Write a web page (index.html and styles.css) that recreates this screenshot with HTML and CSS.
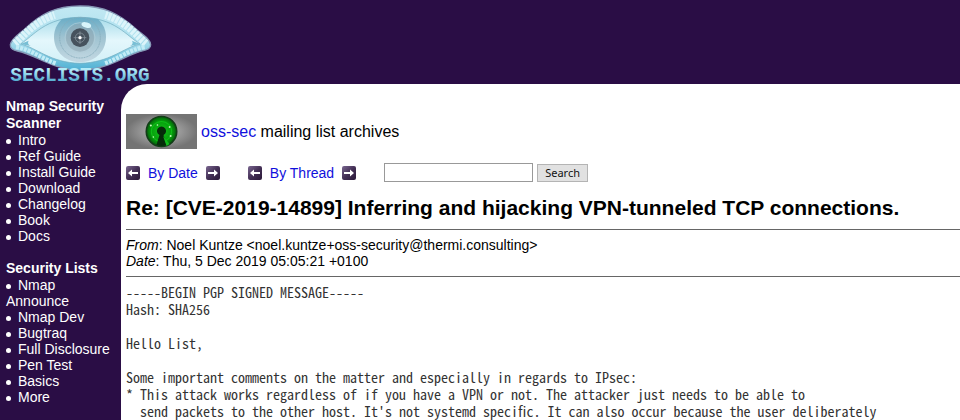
FILE: index.html
```
<!DOCTYPE html>
<html lang="en">
<head>
  <meta charset="UTF-8">
  <meta name="viewport" content="width=device-width, initial-scale=1">
  <title>oss-sec: Re: [CVE-2019-14899] Inferring and hijacking VPN-tunneled TCP connections.</title>
  <link rel="stylesheet" href="styles.css">
</head>
<body>

  <header class="top">
    <a href="#" aria-label="SecLists.Org">
      <svg class="logo" viewBox="0 0 480 252">
        <defs>
          <linearGradient id="lid" x1="0" y1="0" x2="0" y2="1">
            <stop offset="0" stop-color="#c3e9f3"/>
            <stop offset="0.55" stop-color="#a9deed"/>
            <stop offset="1" stop-color="#4fb0d3"/>
          </linearGradient>
          <linearGradient id="white" x1="0" y1="0" x2="0" y2="1">
            <stop offset="0" stop-color="#a5dbe9"/>
            <stop offset="0.5" stop-color="#e4f7fc"/>
            <stop offset="1" stop-color="#d3f0f7"/>
          </linearGradient>
          <linearGradient id="iris" x1="0" y1="0" x2="0" y2="1">
            <stop offset="0" stop-color="#68acc6"/>
            <stop offset="0.45" stop-color="#9fc3d1"/>
            <stop offset="1" stop-color="#c4d9e3"/>
          </linearGradient>
          <linearGradient id="letters" x1="0" y1="0" x2="0" y2="1">
            <stop offset="0.2" stop-color="#b4ecf8"/>
            <stop offset="0.8" stop-color="#4aa5cb"/>
          </linearGradient>
        </defs>
        <path d="M31 134C32 119 55 104 72 89C122 42 166 18 240 18C314 18 358 42 408 87C426 103 451 116 452 134C452 146 442 149 430 152C374 165 330 208 240 211C154 208 110 165 52 153C38 150 30 146 31 134Z" fill="url(#lid)" stroke="#8798b6" stroke-width="4"/>
        <path d="M62 132C100 108 136 52 240 52C344 52 380 108 420 132C370 143 330 188 240 190C150 188 110 143 62 132Z" fill="url(#white)" stroke="#6da9bd" stroke-width="2"/>
        <!-- lashes -->
        <g fill="none" stroke="#dcf4fa" stroke-width="23" stroke-dasharray="9 3">
          <path d="M44 130C72 108 100 66 164 45"/>
          <path d="M438 130C410 108 382 66 316 45"/>
        </g>
        <g fill="none" stroke="#c3ecf6" stroke-width="13" stroke-dasharray="9 3">
          <path d="M48 141C100 151 126 177 170 191"/>
          <path d="M434 141C382 151 356 177 312 191"/>
        </g>
        <path d="M62 132L86 122Q80 131 92 138ZM420 132L396 122Q402 131 390 138Z" fill="#78bfd5"/>
        <path d="M186 57Q240 46 294 57C310 72 318 91 318 111C318 148 293 184 240 187C187 184 162 148 162 111C162 91 170 72 186 57Z" fill="url(#iris)"/>
        <circle cx="240" cy="113" r="61" fill="none" stroke="#86adbd" stroke-width="3" stroke-dasharray="3 2"/>
        <circle cx="240" cy="113" r="42" fill="#8fa7b2" opacity="0.6"/>
        <circle cx="240" cy="113" r="45" fill="none" stroke="#b4cdd8" stroke-width="2"/>
        <circle cx="240" cy="113" r="28" fill="#46525d"/>
        <circle cx="240" cy="113" r="14" fill="none" stroke="#8e9ca5" stroke-width="2"/>
        <path d="M240 94V132M221 113H259" stroke="#8e9ca5" stroke-width="2"/>
        <circle cx="240" cy="113" r="5" fill="#fff"/>
        <ellipse cx="259" cy="75" rx="15" ry="8" fill="#d8f5fb" transform="rotate(18 259 75)"/>
        <text class="logo-text" x="31" y="243">SECLISTS.ORG</text>
      </svg>
    </a>
  </header>

  <div class="page">
    <nav class="sidebar">
      <h2>Nmap Security Scanner</h2>
      <ul>
        <li><a href="#">Intro</a></li>
        <li><a href="#">Ref Guide</a></li>
        <li><a href="#">Install Guide</a></li>
        <li><a href="#">Download</a></li>
        <li><a href="#">Changelog</a></li>
        <li><a href="#">Book</a></li>
        <li><a href="#">Docs</a></li>
      </ul>
      <h2>Security Lists</h2>
      <ul>
        <li><a href="#">Nmap Announce</a></li>
        <li><a href="#">Nmap Dev</a></li>
        <li><a href="#">Bugtraq</a></li>
        <li><a href="#">Full Disclosure</a></li>
        <li><a href="#">Pen Test</a></li>
        <li><a href="#">Basics</a></li>
        <li><a href="#">More</a></li>
      </ul>
    </nav>

    <main class="content">
      <svg width="0" height="0" class="defs" aria-hidden="true">
        <linearGradient id="btn" x1="0" y1="0" x2="1" y2="1">
          <stop offset="0" stop-color="#7a6790"/>
          <stop offset="0.5" stop-color="#443056"/>
          <stop offset="1" stop-color="#2b1938"/>
        </linearGradient>
        <symbol id="left" viewBox="0 0 14 14">
          <rect width="14" height="14" rx="2" fill="url(#btn)"/>
          <path d="M2 7L6 3.5V6H12V8H6V10.5Z" fill="#fff"/>
        </symbol>
        <symbol id="right" viewBox="0 0 14 14">
          <rect width="14" height="14" rx="2" fill="url(#btn)"/>
          <path d="M12 7L8 3.5V6H2V8H8V10.5Z" fill="#fff"/>
        </symbol>
      </svg>

      <div class="list-title">
        <svg class="list-logo" viewBox="0 0 70 35" preserveAspectRatio="none">
          <defs>
            <radialGradient id="steel">
              <stop offset="0.3" stop-color="#aaa"/>
              <stop offset="1" stop-color="#747474"/>
            </radialGradient>
            <radialGradient id="green">
              <stop offset="0" stop-color="#12c51b"/>
              <stop offset="0.7" stop-color="#069c0c"/>
              <stop offset="1" stop-color="#045e0b"/>
            </radialGradient>
          </defs>
          <rect width="70" height="35" fill="url(#steel)"/>
          <circle cx="35" cy="17.5" r="15" fill="url(#green)" stroke="#123d17" stroke-width="1.6"/>
          <circle cx="35" cy="17.5" r="10" fill="none" stroke="#18e024" opacity="0.5"/>
          <path d="M33 21A4.500 4.500 0 1 1 37 21L40 31Q35 33 30 31Z" fill="#062c0a"/>
          <path d="M36.500 22L43 30L40 32Z" fill="#12bb1c"/>
          <g fill="#c8ffbd">
            <circle cx="24.500" cy="11.500" r="1"/>
            <circle cx="31" cy="11" r="0.8"/>
            <circle cx="43" cy="13" r="0.9"/>
            <circle cx="44" cy="22" r="1"/>
            <circle cx="27" cy="23" r="0.8"/>
          </g>
        </svg>
        <div><a href="#">oss-sec</a> mailing list archives</div>
      </div>

      <div class="toolbar">
        <div class="pager">
          <a href="#" aria-label="Previous by date"><svg class="arrow"><use href="#left"/></svg></a>
          <a href="#">By Date</a>
          <a href="#" aria-label="Next by date"><svg class="arrow"><use href="#right"/></svg></a>
        </div>
        <div class="pager">
          <a href="#" aria-label="Previous by thread"><svg class="arrow"><use href="#left"/></svg></a>
          <a href="#">By Thread</a>
          <a href="#" aria-label="Next by thread"><svg class="arrow"><use href="#right"/></svg></a>
        </div>
        <form class="search">
          <input type="text" name="q" aria-label="Search">
          <button type="submit">Search</button>
        </form>
      </div>

      <h1>Re: [CVE-2019-14899] Inferring and hijacking VPN-tunneled TCP connections.</h1>
      <hr>
      <div class="meta">
        <em>From</em>: Noel Kuntze &lt;noel.kuntze+oss-security@thermi.consulting&gt;<br>
        <em>Date</em>: Thu, 5 Dec 2019 05:05:21 +0100
      </div>
      <hr>
<pre>
-----BEGIN PGP SIGNED MESSAGE-----
Hash: SHA256

Hello List,

Some important comments on the matter and especially in regards to IPsec:
* This attack works regardless of if you have a VPN or not. The attacker just needs to be able to
  send packets to the other host. It's not systemd specific. It can also occur because the user deliberately
</pre>
    </main>
  </div>

</body>
</html>
```
FILE: styles.css
```
* {
  box-sizing: border-box;
}
body {
  margin: 0;
  font-family: "Liberation Sans", Arial, sans-serif;
  font-size: 14px;
  line-height: 16px;
  color: #000;
  background-color: #2a0d45;
}
a {
  color: #1010dc;
  text-decoration: none;
}
.logo {
  display: block;
  width: 160px;
  height: 84px;
  overflow: visible;
}
.logo-text {
  font: bold 58px "Liberation Mono", "Courier New", monospace;
  fill: url(#letters);
}
.page {
  display: flex;
}
.sidebar {
  flex: 0 0 121px;
  padding: 14px 6px 0;
  color: #fff;
}
.sidebar a {
  color: #fff;
}
.sidebar h2 {
  margin: 0;
  font-size: 14px;
  line-height: 17px;
}
.sidebar ul {
  margin: 0 0 16px;
  padding: 0;
  list-style: none;
}
.sidebar li::before {
  content: "";
  display: inline-block;
  width: 5px;
  height: 5px;
  margin-right: 7px;
  border-radius: 50%;
  background-color: #fff;
  vertical-align: middle;
}
.content {
  flex: 1;
  min-width: 0;
  padding: 30px 0 0 5px;
  background-color: #fff;
  border-top-left-radius: 26px;
}
.defs {
  position: absolute;
}
.list-title {
  display: flex;
  align-items: center;
  gap: 4px;
  font-size: 16px;
}
.list-logo {
  width: 71px;
  height: 35px;
}
.toolbar {
  display: flex;
  align-items: center;
  gap: 28px;
  margin-top: 14px;
}
.pager {
  display: flex;
  align-items: center;
  gap: 8px;
}
.arrow {
  display: block;
  width: 14px;
  height: 14px;
}
.search {
  display: flex;
  align-items: center;
  gap: 4px;
}
.search input {
  width: 149px;
  height: 19px;
  border: 1px solid #999;
  background-color: #fff;
}
.search button {
  height: 18px;
  padding: 0 7px;
  border: 1px solid #b4b4b4;
  background-color: #e1e1e1;
  font: 11px/16px "Noto Sans", sans-serif;
  color: #111;
}
h1 {
  margin: 13px 0 8px;
  font-size: 21px;
  line-height: 26px;
}
hr {
  height: 1px;
  margin: 7px 0;
  border: 0;
  background-color: #666;
}
/* half-width latin keeps the message on a 7px grid */
pre {
  margin: 0;
  font: 14px/17px "Noto Sans CJK TC", "Liberation Mono", monospace;
  font-feature-settings: "hwid";
  color: #333;
}
```
